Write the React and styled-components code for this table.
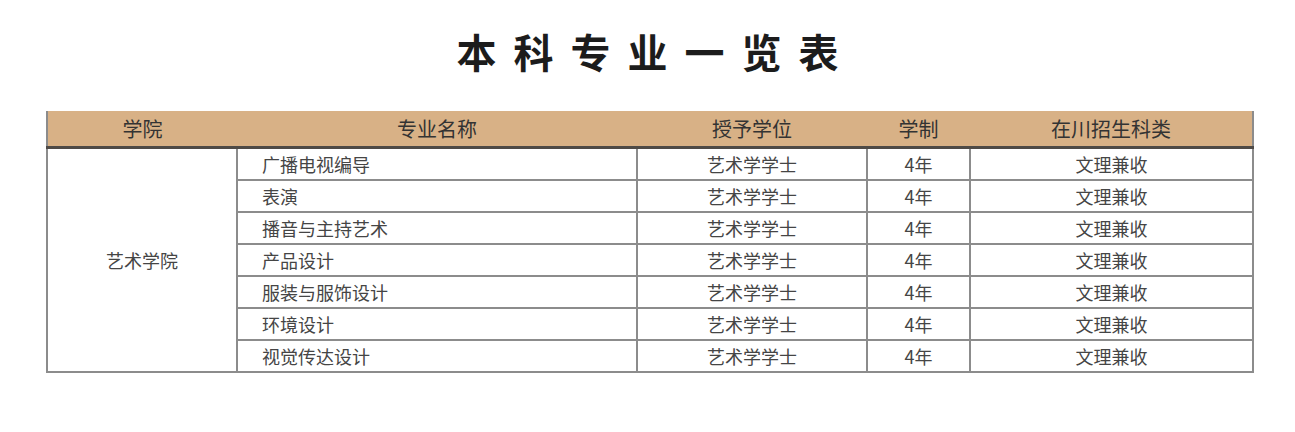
import React from 'react'
import styled, { createGlobalStyle } from "styled-components"

const GlobalStyle = createGlobalStyle`
    html, body {
        margin: 0;
        padding: 0;
        background: #ffffff;
    }
    body {
        font-family: "Noto Sans CJK SC", "Noto Sans", sans-serif;
    }
`

const majors = [
    "广播电视编导",
    "表演",
    "播音与主持艺术",
    "产品设计",
    "服装与服饰设计",
    "环境设计",
    "视觉传达设计",
]

function App() {
    return (
        <Page>
            <GlobalStyle />
            <Title>本科专业一览表</Title>
            <TableWrap>
                <Table>
                    <colgroup>
                        <col style={{ width: 190 }} />
                        <col style={{ width: 400 }} />
                        <col style={{ width: 230 }} />
                        <col style={{ width: 103 }} />
                        <col style={{ width: 283 }} />
                    </colgroup>
                    <thead>
                        <tr>
                            <Th>学院</Th>
                            <Th>专业名称</Th>
                            <Th>授予学位</Th>
                            <Th>学制</Th>
                            <Th>在川招生科类</Th>
                        </tr>
                    </thead>
                    <tbody>
                        {majors.map((name, i) => (
                            <tr key={name}>
                                {i === 0 && <Td rowSpan={majors.length}>艺术学院</Td>}
                                <Td $left>{name}</Td>
                                <Td>艺术学学士</Td>
                                <Td>4年</Td>
                                <Td>文理兼收</Td>
                            </tr>
                        ))}
                    </tbody>
                </Table>
            </TableWrap>
        </Page>
    )
}

const Page = styled.div`
    width: 1295px;
    height: 432px;
    box-sizing: border-box;
`

const Title = styled.h1`
    margin: 0;
    padding: 23px 0 0 17px;
    height: 111px;
    box-sizing: border-box;
    text-align: center;
    font-size: 40px;
    line-height: 56px;
    font-weight: 700;
    letter-spacing: 17px;
    color: #1c1c1c;
`

const TableWrap = styled.div`
    padding: 0 41px 0 46px;
`

const Table = styled.table`
    width: 100%;
    table-layout: fixed;
    border-collapse: collapse;
    border: 2px solid #8c8c8c;
    border-top: none;
`

const Th = styled.th`
    height: 35px;
    padding: 0;
    background: #d8b186;
    border-bottom: 3px solid #4e4a46;
    font-size: 20px;
    font-weight: 400;
    color: #333333;
    text-align: center;
`

const Td = styled.td`
    height: 30px;
    padding: ${p => (p.$left ? "0 0 0 24px" : "0")};
    border: 2px solid #8c8c8c;
    font-size: 18px;
    color: #454545;
    text-align: ${p => (p.$left ? "left" : "center")};
    vertical-align: middle;
`

export default App
